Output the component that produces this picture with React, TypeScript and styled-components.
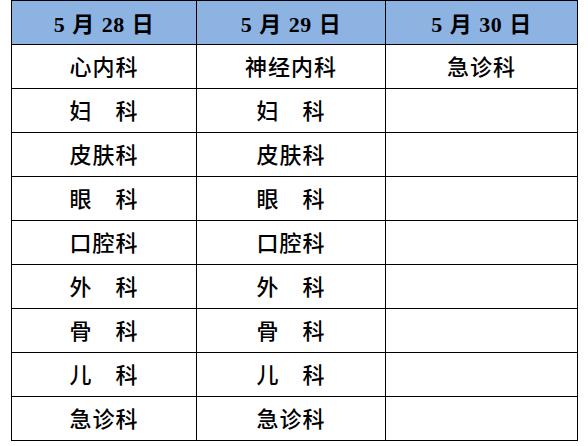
import styled, { createGlobalStyle } from 'styled-components';

const GlobalStyle = createGlobalStyle`
  html, body {
    margin: 0;
    padding: 0;
    background: #fff;
  }
`;

const Page = styled.div`
  padding: 0 0 0 11px;
`;

const Table = styled.table`
  border-collapse: collapse;
  table-layout: fixed;
  width: 566px;
`;

const Col = styled.col<{ $width: number }>`
  width: ${(p) => p.$width}px;
`;

const HeadCell = styled.th`
  box-sizing: border-box;
  height: 44px;
  padding: 0 0 1px;
  border: 1.5px solid #000;
  background-color: #8db3e2;
  color: #000;
  font-family: 'Liberation Serif', 'Noto Sans CJK SC', serif;
  font-size: 22px;
  font-weight: bold;
  letter-spacing: 0.5px;
  word-spacing: 1px;
  text-align: center;
  white-space: pre;
`;

const Cell = styled.td`
  box-sizing: border-box;
  height: 44px;
  padding: 0 0 4px;
  border: 1.5px solid #000;
  color: #000;
  font-family: 'Noto Sans CJK SC', sans-serif;
  font-size: 22px;
  font-weight: 500;
  letter-spacing: 1px;
  text-align: center;
`;

const widths = [185, 189, 192];

const days = ['5 月 28 日', '5 月 29 日', '5 月 30 日'];

const rows: string[][] = [
  ['心内科', '神经内科', '急诊科'],
  ['妇　科', '妇　科', ''],
  ['皮肤科', '皮肤科', ''],
  ['眼　科', '眼　科', ''],
  ['口腔科', '口腔科', ''],
  ['外　科', '外　科', ''],
  ['骨　科', '骨　科', ''],
  ['儿　科', '儿　科', ''],
  ['急诊科', '急诊科', ''],
];

const App = () => {
  return (
    <Page>
      <GlobalStyle />
      <Table>
        <colgroup>
          {widths.map((w, i) => (
            <Col key={`col-${i}`} $width={w} />
          ))}
        </colgroup>
        <thead>
          <tr>
            {days.map((day) => (
              <HeadCell key={day}>{day}</HeadCell>
            ))}
          </tr>
        </thead>
        <tbody>
          {rows.map((row, i) => (
            <tr key={`row-${i}`}>
              {row.map((dept, j) => (
                <Cell key={`cell-${i}-${j}`}>{dept}</Cell>
              ))}
            </tr>
          ))}
        </tbody>
      </Table>
    </Page>
  );
};

export default App;
